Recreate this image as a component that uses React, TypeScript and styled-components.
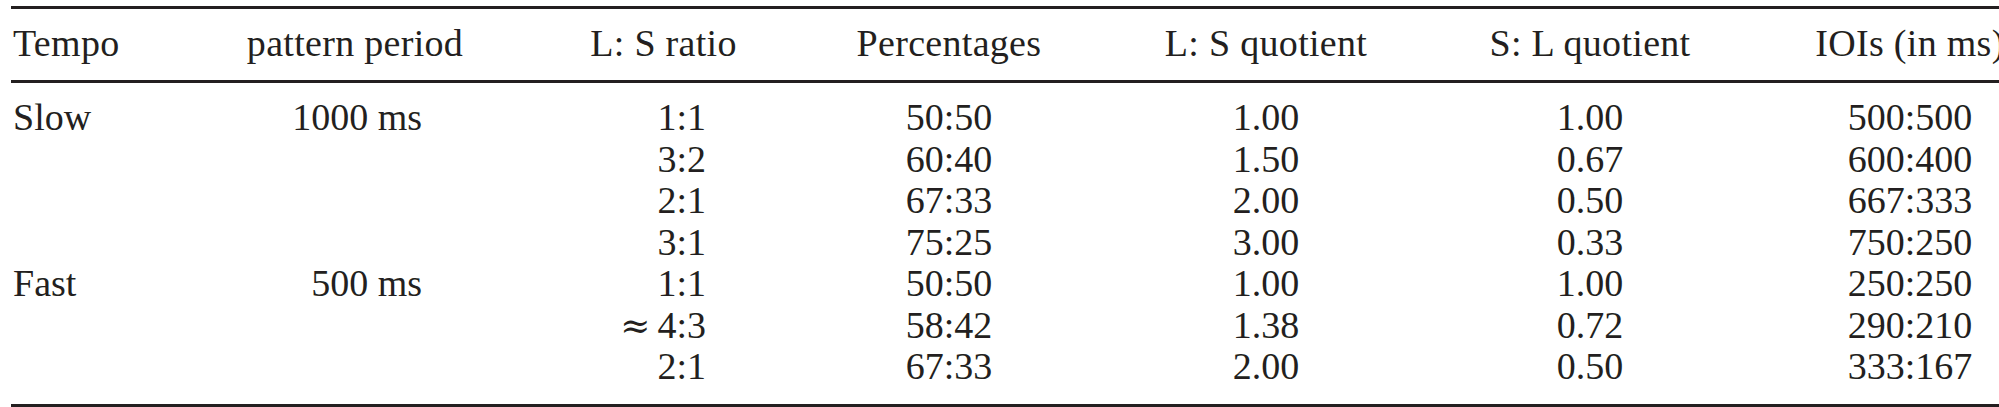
import React from 'react';
import styled, {createGlobalStyle} from 'styled-components';

const ink = '#231f20';
const columns = '189px 310px 307px 264px 370px 278px 362px';

const Global = createGlobalStyle`
	html, body {
		margin: 0;
		padding: 0;
		background: #fff;
		overflow: hidden;
	}
`;

const Page = styled.div`
	width: 1999px;
	height: 407px;
	overflow: hidden;
	padding: 6px 0 0 11px;
	box-sizing: border-box;
	font-family: 'Liberation Serif', 'Times New Roman', serif;
	font-size: 38px;
	color: ${ink};
`;

const Table = styled.div`
	width: 2090px;
	display: flex;
	flex-direction: column;
	border-top: 3px solid ${ink};
	border-bottom: 3px solid ${ink};
`;

const HeadRow = styled.div`
	display: grid;
	grid-template-columns: ${columns};
	grid-auto-rows: 41.5px;
	line-height: 41.5px;
	padding: 14.4px 0 15px;
	border-bottom: 3px solid ${ink};
`;

const Body = styled.div`
	display: grid;
	grid-template-columns: ${columns};
	grid-auto-rows: 41.5px;
	line-height: 41.5px;
	padding: 14.4px 0 16px;
`;

type Align = 'left' | 'center' | 'right';

type CellProps = {
	$align: Align;
	$pad?: number;
};

const HeadCell = styled.div<CellProps>`
	white-space: nowrap;
	text-align: ${(props) => props.$align};
	padding-left: ${(props) => (props.$align === 'left' ? '2px' : '0')};
	letter-spacing: 0.3px;
`;

const Cell = styled.div<CellProps>`
	white-space: nowrap;
	text-align: ${(props) => props.$align};
	padding-left: ${(props) => (props.$align === 'left' ? '2px' : '0')};
	padding-right: ${(props) => props.$pad ?? 0}px;
`;

// the approx sign is set wider, like a math glyph
const Approx = styled.span`
	font-family: 'DejaVu Serif', serif;
	font-size: 36px;
	margin-right: 7px;
`;

const headers: Array<[string, Align]> = [
	['Tempo', 'left'],
	['pattern period', 'center'],
	['L: S ratio', 'center'],
	['Percentages', 'center'],
	['L: S quotient', 'center'],
	['S: L quotient', 'center'],
	['IOIs (in ms)', 'center']
];

// how the data sits in each column
const cellAlign: Array<{align: Align; pad?: number}> = [
	{align: 'left'},
	{align: 'right', pad: 88},
	{align: 'right', pad: 111},
	{align: 'center'},
	{align: 'center'},
	{align: 'center'},
	{align: 'center'}
];

const rows = [
	['Slow', '1000 ms', '1:1', '50:50', '1.00', '1.00', '500:500'],
	['', '', '3:2', '60:40', '1.50', '0.67', '600:400'],
	['', '', '2:1', '67:33', '2.00', '0.50', '667:333'],
	['', '', '3:1', '75:25', '3.00', '0.33', '750:250'],
	['Fast', '500 ms', '1:1', '50:50', '1.00', '1.00', '250:250'],
	['', '', '~4:3', '58:42', '1.38', '0.72', '290:210'],
	['', '', '2:1', '67:33', '2.00', '0.50', '333:167']
];

const renderValue = (value: string) => {
	if (value.startsWith('~')) {
		return (
			<>
				<Approx>{'\u2248'}</Approx>
				{value.slice(1)}
			</>
		);
	}

	return value;
};

const App = () => {
	return (
		<>
			<Global />
			<Page>
				<Table>
					<HeadRow>
						{headers.map(([label, align]) => (
							<HeadCell key={label} $align={align}>
								{label}
							</HeadCell>
						))}
					</HeadRow>
					<Body>
						{rows.map((row, r) =>
							row.map((value, c) => (
								<Cell key={`${r}-${c}`} $align={cellAlign[c].align} $pad={cellAlign[c].pad}>
									{renderValue(value)}
								</Cell>
							))
						)}
					</Body>
				</Table>
			</Page>
		</>
	);
};

export default App;
